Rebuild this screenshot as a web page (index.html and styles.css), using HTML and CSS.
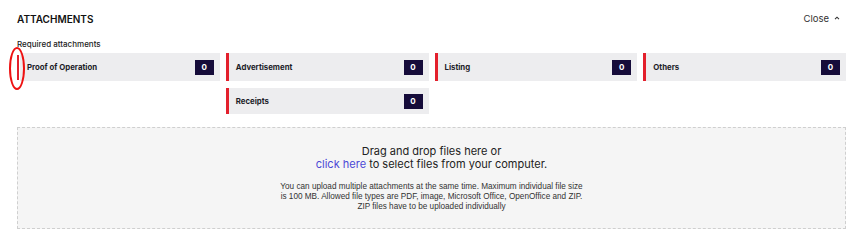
FILE: index.html
```html
<!DOCTYPE html>
<html>
<head>
<meta charset="utf-8">
<link rel="stylesheet" href="styles.css">
</head>
<body>
<div class="panel">
  <div class="header">
    <div class="title">ATTACHMENTS</div>
    <div class="close">Close <svg class="chev" width="6" height="4" viewBox="0 0 6 4"><path d="M1 3.2 L3 1.2 L5 3.2" fill="none" stroke="#333" stroke-width="1.1"/></svg></div>
  </div>
  <div class="subtitle">Required attachments</div>
  <div class="grid">
    <div class="tile first"><span class="label">Proof of Operation</span><span class="badge">0</span></div>
    <div class="tile"><span class="label">Advertisement</span><span class="badge">0</span></div>
    <div class="tile"><span class="label">Listing</span><span class="badge">0</span></div>
    <div class="tile"><span class="label">Others</span><span class="badge">0</span></div>
    <div class="tile col2"><span class="label">Receipts</span><span class="badge">0</span></div>
  </div>
  <div class="drop">
    <div class="main">Drag and drop files here or<br><span class="link">click here</span> to select files from your computer.</div>
    <div class="note">You can upload multiple attachments at the same time. Maximum individual file size<br>is 100 MB. Allowed file types are PDF, image, Microsoft Office, OpenOffice and ZIP.<br>ZIP files have to be uploaded individually</div>
  </div>
</div>
<div class="mark"></div>
</body>
</html>
```
FILE: styles.css
```css
html, body { margin: 0; padding: 0; background: #fff; }
body { width: 863px; height: 242px; overflow: hidden; font-family: Inter, "Liberation Sans", sans-serif; color: #1a1a1a; position: relative; }
.panel { padding: 12px 17px 0 17px; }
.header { display: flex; justify-content: space-between; align-items: center; height: 13px; }
.title { font-size: 10px; font-weight: 600; color: #111; }
.close { font-size: 9.5px; color: #333; display: flex; align-items: center; gap: 5px; margin-right: 6px; }
.chev { margin-top: -1px; }
.subtitle { font-size: 8px; font-weight: 500; margin-top: 14px; color: #222; }
.grid { display: grid; grid-template-columns: repeat(4, 1fr); column-gap: 6px; row-gap: 7px; margin-top: 4px; }
.tile { height: 28px; background: #ededef; border-left: 3px solid #e3202c; display: flex; align-items: center; justify-content: space-between; padding: 0 6px 0 7px; }
.tile.col2 { grid-column: 2; height: 26px; }
.tile.first { border-left-color: #fff; }
.label { font-size: 7.8px; font-weight: 700; color: #1c1c28; }
.badge { background: #160c3a; color: #fff; font-size: 8px; font-weight: 700; width: 19px; height: 15px; display: flex; align-items: center; justify-content: center; }
.drop { margin-top: 13px; height: 102px; background: #f5f5f5; border: 1px dashed #cfcfcf; text-align: center; box-sizing: border-box; padding-top: 17px; }
.main { font-size: 11px; line-height: 13px; color: #222; }
.link { color: #4b48d6; }
.note { font-family: "Liberation Sans", Arial, sans-serif; font-size: 8.2px; line-height: 10px; color: #333; margin-top: 11px; }
.mark { position: absolute; left: 9px; top: 47px; width: 16px; height: 43px; border: 2px solid #e11; border-radius: 50%; box-sizing: border-box; }
.mark::after { content: ""; position: absolute; left: 6px; top: 6px; width: 2px; height: 25px; background: #e3202c; }
```
